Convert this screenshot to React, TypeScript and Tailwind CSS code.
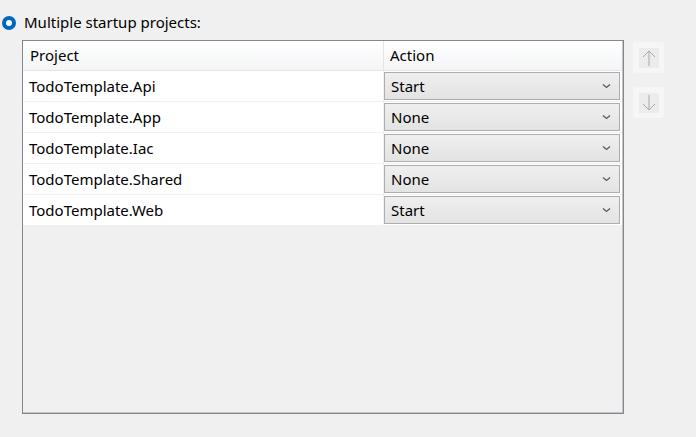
const rows = [
  { name: "TodoTemplate.Api", action: "Start" },
  { name: "TodoTemplate.App", action: "None" },
  { name: "TodoTemplate.Iac", action: "None" },
  { name: "TodoTemplate.Shared", action: "None" },
  { name: "TodoTemplate.Web", action: "Start" },
]

const Chevron = () => (
  <svg width="9" height="6" viewBox="0 0 9 6" className="text-[#5a5a5a]">
    <path d="M1 1.5 L4.5 4.5 L8 1.5" fill="none" stroke="currentColor" strokeWidth="1.3" />
  </svg>
)

const MoveButton = ({ dir }: { dir: "up" | "down" }) => (
  <div className="flex h-[31px] w-[31px] items-center justify-center rounded-[3px] bg-[#f6f6f6]">
    <div className="flex h-[20px] w-[20px] items-center justify-center bg-[#ececec]">
      <svg width="14" height="18" viewBox="0 0 14 18" className="text-[#a8a8a8]">
        {dir === "up" ? (
          <path d="M7 2 V17 M1 8 L7 2 L13 8" fill="none" stroke="currentColor" strokeWidth="1" />
        ) : (
          <path d="M7 1 V16 M1 10 L7 16 L13 10" fill="none" stroke="currentColor" strokeWidth="1" />
        )}
      </svg>
    </div>
  </div>
)

export default function App() {
  return (
    <div
      className="h-[437px] w-[696px] bg-[#f0f0f0] text-[15px] text-black"
      style={{ fontFamily: '"Segoe UI", "Noto Sans", "Open Sans", sans-serif' }}
    >
      {/* radio */}
      <div className="flex h-[40px] items-center pl-[2px] pt-[5px]">
        <div className="flex h-[14px] w-[14px] items-center justify-center rounded-full bg-[#0067c0]">
          <div className="h-[6px] w-[6px] rounded-full bg-white" />
        </div>
        <span className="ml-[8px] leading-none">Multiple startup projects:</span>
      </div>

      <div className="flex">
        {/* grid */}
        <div className="ml-[22px] h-[374px] w-[602px] border border-[#828790]">
          <div className="h-full w-full border border-[#c4c4c4] border-l-0 border-t-0">
            {/* header */}
            <div className="flex h-[30px] border-b border-[#e5e5e5] bg-gradient-to-b from-white to-[#f4f5f7]">
              <div className="flex w-[361px] items-center border-r border-[#e5e5e5] pl-[7px]">Project</div>
              <div className="flex flex-1 items-center pl-[6px]">Action</div>
            </div>
            {rows.map((r) => (
              <div key={r.name} className="flex h-[31px] border-b border-[#f0f0f0] bg-white">
                <div className="flex w-[361px] items-center border-r border-[#f0f0f0] pl-[6px]">{r.name}</div>
                <div className="flex flex-1 items-start pr-[2px] pt-[1px]">
                  <div className="flex h-[28px] w-full items-center justify-between border border-[#adadad] bg-gradient-to-b from-[#efefef] to-[#e3e3e3] pl-[6px] pr-[8px]">
                    <span>{r.action}</span>
                    <Chevron />
                  </div>
                </div>
              </div>
            ))}
          </div>
        </div>

        {/* move buttons */}
        <div className="ml-[9px] mt-[2px] flex flex-col gap-[14px]">
          <MoveButton dir="up" />
          <MoveButton dir="down" />
        </div>
      </div>
    </div>
  )
}
